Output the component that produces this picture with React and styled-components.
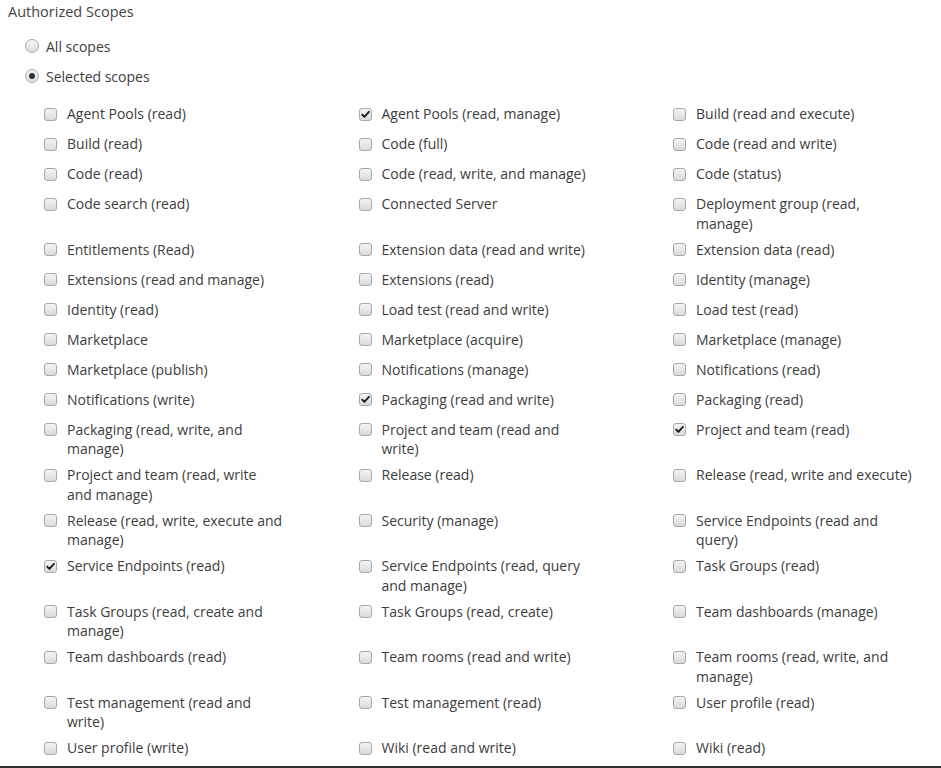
import React, { useState } from "react";
import styled, { createGlobalStyle } from "styled-components";

const GlobalStyle = createGlobalStyle`
  html, body {
    margin: 0;
    padding: 0;
    background: #ffffff;
  }
  body {
    font-family: "Open Sans", "Noto Sans", "Liberation Sans", sans-serif;
    color: #3d3d3d;
  }
`;

const Page = styled.div`
  box-sizing: border-box;
  height: 768px;
  overflow: hidden;
  border-bottom: 2px solid #2e2e2e;
`;

const Title = styled.div`
  padding: 2px 8px 0;
  font-size: 14.5px;
  line-height: 20px;
  color: #444;
`;

const RadioGroup = styled.div`
  padding: 9px 0 0 25px;
`;

const RadioRow = styled.label`
  display: flex;
  align-items: center;
  gap: 7px;
  height: 30px;
  font-size: 14px;
  cursor: pointer;
`;

const RadioCircle = styled.span`
  box-sizing: border-box;
  width: 14px;
  height: 14px;
  border-radius: 50%;
  border: 1px solid #a8a8a8;
  background: linear-gradient(#f6f6f6, #dcdcdc);
  display: flex;
  align-items: center;
  justify-content: center;

  &::after {
    content: "";
    width: 6px;
    height: 6px;
    border-radius: 50%;
    background: #333;
    display: ${(p) => (p.$on ? "block" : "none")};
  }
`;

const ScopeGrid = styled.div`
  display: grid;
  grid-template-columns: repeat(3, 314.5px);
  padding: 13px 0 0 44px;
`;

const ScopeItem = styled.label`
  display: flex;
  align-items: flex-start;
  gap: 10px;
  min-height: 24px;
  margin-bottom: 6px;
  cursor: pointer;
`;

const Box = styled.span`
  box-sizing: border-box;
  flex: none;
  width: 13px;
  height: 13px;
  margin-top: 3.5px;
  border: 1px solid #a8a8a8;
  border-radius: 3px;
  background: linear-gradient(#f4f4f4, #dadada);
  display: flex;
  align-items: center;
  justify-content: center;
`;

const ScopeText = styled.span`
  font-size: 14px;
  line-height: 19.75px;
  white-space: pre;
  color: #3d3d3d;
`;

const rows = [
  ["Agent Pools (read)", "*Agent Pools (read, manage)", "Build (read and execute)"],
  ["Build (read)", "Code (full)", "Code (read and write)"],
  ["Code (read)", "Code (read, write, and manage)", "Code (status)"],
  ["Code search (read)", "Connected Server", "Deployment group (read,\nmanage)"],
  ["Entitlements (Read)", "Extension data (read and write)", "Extension data (read)"],
  ["Extensions (read and manage)", "Extensions (read)", "Identity (manage)"],
  ["Identity (read)", "Load test (read and write)", "Load test (read)"],
  ["Marketplace", "Marketplace (acquire)", "Marketplace (manage)"],
  ["Marketplace (publish)", "Notifications (manage)", "Notifications (read)"],
  ["Notifications (write)", "*Packaging (read and write)", "Packaging (read)"],
  ["Packaging (read, write, and\nmanage)", "Project and team (read and\nwrite)", "*Project and team (read)"],
  ["Project and team (read, write\nand manage)", "Release (read)", "Release (read, write and execute)"],
  ["Release (read, write, execute and\nmanage)", "Security (manage)", "Service Endpoints (read and\nquery)"],
  ["*Service Endpoints (read)", "Service Endpoints (read, query\nand manage)", "Task Groups (read)"],
  ["Task Groups (read, create and\nmanage)", "Task Groups (read, create)", "Team dashboards (manage)"],
  ["Team dashboards (read)", "Team rooms (read and write)", "Team rooms (read, write, and\nmanage)"],
  ["Test management (read and\nwrite)", "Test management (read)", "User profile (read)"],
  ["User profile (write)", "Wiki (read and write)", "Wiki (read)"],
];

const initialScopes = rows.flat().map((s) => ({
  label: s.replace(/^\*/, ""),
  checked: s.startsWith("*"),
}));

const CheckMark = () => (
  <svg width="11" height="11" viewBox="0 0 11 11">
    <path d="M2.2 5.6 L4.4 7.9 L8.9 2.8" fill="none" stroke="#1e1e1e" strokeWidth="1.9" strokeLinecap="round" strokeLinejoin="round" />
  </svg>
);

const App = () => {
  const [mode, setMode] = useState("selected");
  const [scopes, setScopes] = useState(initialScopes);

  const toggle = (i) =>
    setScopes((prev) => prev.map((s, j) => (j === i ? { ...s, checked: !s.checked } : s)));

  return (
    <Page>
      <GlobalStyle />
      <Title>Authorized Scopes</Title>
      <RadioGroup>
        <RadioRow onClick={() => setMode("all")}>
          <RadioCircle $on={mode === "all"} />
          All scopes
        </RadioRow>
        <RadioRow onClick={() => setMode("selected")}>
          <RadioCircle $on={mode === "selected"} />
          Selected scopes
        </RadioRow>
      </RadioGroup>
      <ScopeGrid>
        {scopes.map((scope, i) => (
          <ScopeItem key={scope.label} onClick={() => toggle(i)}>
            <Box>{scope.checked && <CheckMark />}</Box>
            <ScopeText>{scope.label}</ScopeText>
          </ScopeItem>
        ))}
      </ScopeGrid>
    </Page>
  );
};

export default App;
